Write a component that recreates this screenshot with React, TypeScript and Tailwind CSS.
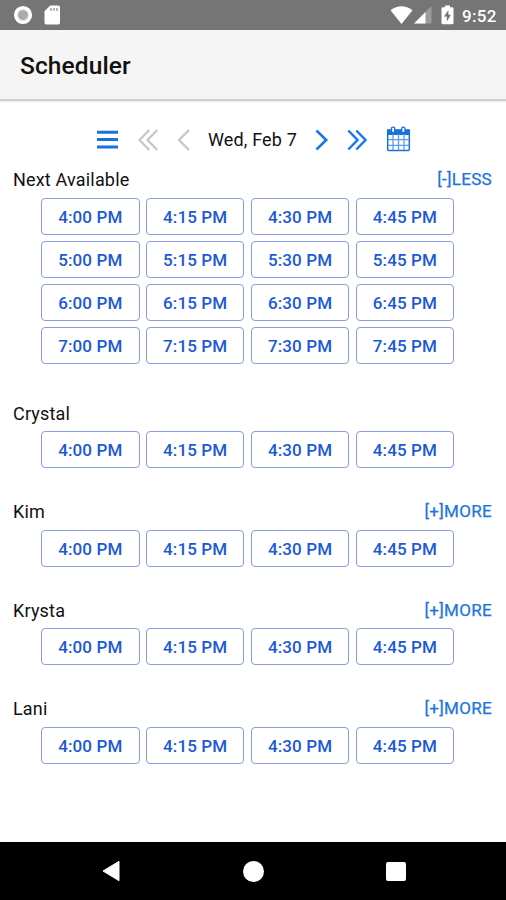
import React from "react";

type Section = { name: string; toggle?: string; times: string[]; spacing: string };

const firstHour = ["4:00 PM", "4:15 PM", "4:30 PM", "4:45 PM"];

const sections: Section[] = [
  {
    name: "Next Available",
    toggle: "[-]LESS",
    times: [4, 5, 6, 7].flatMap((h) => ["00", "15", "30", "45"].map((m) => `${h}:${m} PM`)),
    spacing: "h-[233.5px]",
  },
  { name: "Crystal", times: firstHour, spacing: "h-[98.5px]" },
  { name: "Kim", toggle: "[+]MORE", times: firstHour, spacing: "h-[98.5px]" },
  { name: "Krysta", toggle: "[+]MORE", times: firstHour, spacing: "h-[98.5px]" },
  { name: "Lani", toggle: "[+]MORE", times: firstHour, spacing: "h-[98.5px]" },
];

function StatusBar() {
  return (
    <div className="flex h-[30px] shrink-0 items-center bg-[#757575] pl-[13px] pr-[9px]">
      <svg width="20" height="20" viewBox="0 0 20 20">
        <circle cx="10" cy="10" r="7.3" fill="#b5b5b5" stroke="#fff" strokeWidth="3.6" />
        <circle cx="10" cy="10" r="5.2" fill="#aaa" stroke="#ddd" strokeWidth="0.8" />
      </svg>
      <svg className="ml-[11px]" width="17" height="20" viewBox="0 0 17 20">
        <path d="M6.2 0.5H14.3Q16 0.5 16 2.2V17.8Q16 19.5 14.3 19.5H2.2Q0.5 19.5 0.5 17.8V6.3Z" fill="#fff" />
        <path d="M7 3v3M10 3v3M13 3v3" stroke="#999" strokeWidth="1.4" />
      </svg>
      <div className="grow" />
      <svg width="23" height="19" viewBox="0 0 23 19">
        <path d="M0.5 4.2Q11.5 -3.6 22.5 4.2L11.5 18Z" fill="#fff" />
      </svg>
      <svg className="ml-[1px]" width="18" height="18" viewBox="0 0 18 18">
        <path d="M17.5 0V17.5H0Z" fill="#9c9c9c" />
        <path d="M11.5 6V17.5H0Z" fill="#fff" />
      </svg>
      <svg className="ml-[9px]" width="13" height="20" viewBox="0 0 13 20">
        <path d="M4 0.5H9V2.3H11.2Q12.5 2.3 12.5 3.6V18Q12.5 19.3 11.2 19.3H1.8Q0.5 19.3 0.5 18V3.6Q0.5 2.3 1.8 2.3H4Z" fill="#fff" />
        <path d="M7.4 5L3 11.5H5.8V16.5L10 9.8H7.4Z" fill="#757575" />
      </svg>
      <span className="ml-[8px] mt-[2px] w-[35px] whitespace-nowrap text-[17px] font-medium leading-5 tracking-[0.3px] text-white">9:52</span>
    </div>
  );
}

function DateToolbar() {
  return (
    <div className="flex h-[62px] shrink-0 items-center pl-[97px] pt-[16px]">
      <svg width="21" height="20" viewBox="0 0 21 20">
        <path d="M0 2.2H21M0 9.6H21M0 16.9H21" stroke="#1a73dc" strokeWidth="3" />
      </svg>
      <svg className="ml-[20px]" width="21" height="22" viewBox="0 0 21 22" fill="none" stroke="#c6c6c6" strokeWidth="2.3">
        <path d="M11.3 1L1.5 11L11.3 21M19.3 1L9.5 11L19.3 21" />
      </svg>
      <svg className="ml-[18px]" width="14" height="22" viewBox="0 0 14 22" fill="none" stroke="#c6c6c6" strokeWidth="2.3">
        <path d="M12 1L2 11L12 21" />
      </svg>
      <span className="ml-[17px] w-[90px] whitespace-nowrap text-[18px] leading-6 tracking-[0.15px]">Wed, Feb 7</span>
      <svg className="ml-[16px]" width="15" height="22" viewBox="0 0 15 22" fill="none" stroke="#1677f0" strokeWidth="2.6">
        <path d="M2.5 1.5L12.2 11L2.5 20.5" />
      </svg>
      <svg className="ml-[17px]" width="22" height="22" viewBox="0 0 22 22" fill="none" stroke="#1677f0" strokeWidth="2.5">
        <path d="M2.3 1.5L11.5 11L2.3 20.5M10.3 1.5L19.5 11L10.3 20.5" />
      </svg>
      <svg className="mb-[2px] ml-[18px]" width="25" height="26" viewBox="0 0 25 26">
        <path d="M1.7 4H23.3V23.6Q23.3 24.6 22.3 24.6H2.7Q1.7 24.6 1.7 23.6Z" fill="#fff" stroke="#1971dc" strokeWidth="1.5" />
        <path d="M1 3.8H24V9H1Z" fill="#1971dc" />
        <path d="M7 8V24M12.5 8V24M18 8V24M2 13.6H23M2 19.3H23" stroke="#5b9bef" strokeWidth="1.3" />
        <rect x="5.5" y="1.1" width="3.2" height="5.6" rx="1.4" fill="#fff" stroke="#1971dc" strokeWidth="1.3" />
        <rect x="15.7" y="1.1" width="3.2" height="5.6" rx="1.4" fill="#fff" stroke="#1971dc" strokeWidth="1.3" />
      </svg>
    </div>
  );
}

function SlotSection({ section }: { section: Section }) {
  return (
    <section className={`shrink-0 ${section.spacing}`}>
      <div className="flex h-[34.5px] items-center justify-between pl-[13px] pr-[14px] text-[18px]">
        <h2 className="mb-[1px] tracking-[0.18px]">{section.name}</h2>
        {section.toggle && <button className="mb-[1px] text-[17px] tracking-[0.3px] text-[#1b74e0] [-webkit-text-stroke:0.25px_#1b74e0]">{section.toggle}</button>}
      </div>
      <div className="grid grid-cols-[repeat(4,98.5px)] gap-x-[6.4px] gap-y-[6.3px] pl-[41px]">
        {section.times.map((time) => (
          <button
            key={time}
            className="h-[37px] whitespace-nowrap rounded-[4px] border border-[#899be4] pt-[1px] text-[17px] font-medium leading-5 tracking-[0.12px] text-[#1b59d8]"
          >
            {time}
          </button>
        ))}
      </div>
    </section>
  );
}

function NavigationBar() {
  return (
    <div className="mt-auto flex h-[58px] shrink-0 items-center bg-black pl-[102px]">
      <svg width="18" height="22" viewBox="0 0 18 22">
        <path d="M17 1.3V20.7L1 11Z" fill="#fff" stroke="#fff" strokeLinejoin="round" />
      </svg>
      <div className="ml-[123px] size-[21px] rounded-full bg-white" />
      <div className="ml-[122px] h-[19px] w-[20px] rounded-[2px] bg-white" />
    </div>
  );
}

export default function App() {
  return (
    <div className="flex h-[900px] w-[506px] flex-col overflow-hidden bg-white font-['Roboto','Liberation_Sans',sans-serif] text-[#111]">
      <StatusBar />
      <header className="flex h-[71px] shrink-0 items-center border-b-2 border-[#d0d0d0] bg-[#f5f5f5] pl-[20px] shadow-[0_1px_1px_#eeeeee]">
        <h1 className="mt-[3px] text-[24.5px] font-medium leading-8 tracking-[0.1px]">Scheduler</h1>
      </header>
      <DateToolbar />
      {sections.map((section) => (
        <SlotSection key={section.name} section={section} />
      ))}
      <NavigationBar />
    </div>
  );
}
